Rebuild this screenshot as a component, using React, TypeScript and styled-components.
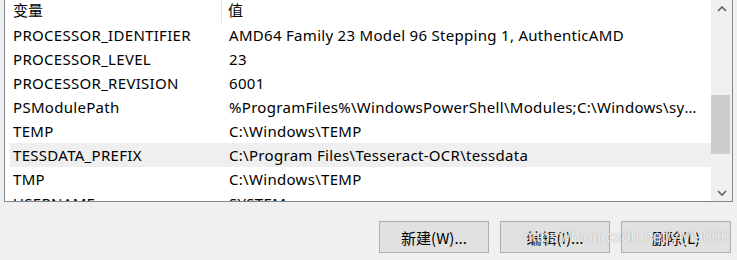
import styled, { createGlobalStyle } from "styled-components";

const GlobalStyle = createGlobalStyle`
  html, body {
    margin: 0;
    padding: 0;
    background: #f0f0f0;
  }
  body {
    width: 737px;
    height: 260px;
    overflow: hidden;
    font-family: "Noto Sans", "Noto Sans CJK SC", sans-serif;
  }
`;

const Page = styled.div`
  display: flex;
  flex-direction: column;
  width: 737px;
  height: 260px;
`;

const ListBox = styled.div`
  display: flex;
  margin-left: 4px;
  width: 727px;
  height: 201px;
  background: #fff;
  border: 1px solid #828790;
  border-top: none;
  overflow: hidden;
`;

const ListArea = styled.div`
  flex: 1;
  display: flex;
  flex-direction: column;
  padding-left: 5px;
  overflow: hidden;
`;

const Header = styled.div`
  display: flex;
  height: 23px;
  flex-shrink: 0;
`;

const HeaderCell = styled.div<{ $w?: number; $pad: number; $sep?: boolean }>`
  display: flex;
  align-items: center;
  width: ${(p) => (p.$w ? `${p.$w}px` : "auto")};
  flex: ${(p) => (p.$w ? "none" : 1)};
  padding-left: ${(p) => p.$pad}px;
  padding-bottom: 4px;
  box-sizing: border-box;
  font-size: 15px;
  color: #000;
  border-right: ${(p) => (p.$sep ? "1px solid #e5e5e5" : "none")};
  font-family: "Noto Sans CJK SC", sans-serif;
`;

const Row = styled.div<{ $selected?: boolean }>`
  display: flex;
  height: 24px;
  flex-shrink: 0;
  align-items: center;
  background: ${(p) => (p.$selected ? "#efefef" : "transparent")};
`;

const Cell = styled.div<{ $w?: number; $pad: number }>`
  width: ${(p) => (p.$w ? `${p.$w}px` : "auto")};
  flex: ${(p) => (p.$w ? "none" : 1)};
  min-width: 0;
  padding-left: ${(p) => p.$pad}px;
  padding-right: 8px;
  box-sizing: border-box;
  font-size: 15px;
  letter-spacing: 0.3px;
  line-height: 24px;
  color: #000;
  white-space: nowrap;
  overflow: hidden;
  text-overflow: ellipsis;
`;

const ScrollBar = styled.div`
  width: 21px;
  display: flex;
  flex-direction: column;
  background: #f0f0f0;
`;

const ArrowButton = styled.div`
  height: 17px;
  display: flex;
  align-items: center;
  justify-content: center;
  flex-shrink: 0;
`;

const Track = styled.div`
  flex: 1;
  display: flex;
  flex-direction: column;
  padding-top: 78px;
`;

const Thumb = styled.div`
  margin: 0 2px 0 0;
  height: 59px;
  background: #cdcdcd;
`;

const Footer = styled.div`
  position: relative;
  display: flex;
  justify-content: flex-end;
  gap: 11px;
  padding: 19px 6px 0 0;
`;

const Button = styled.div`
  width: 110px;
  height: 32px;
  box-sizing: border-box;
  display: flex;
  align-items: center;
  justify-content: center;
  background: #e1e1e1;
  border: 1px solid #adadad;
  font-size: 15px;
  color: #000;
  font-family: "Noto Sans CJK SC", sans-serif;
`;

const Watermark = styled.div`
  position: absolute;
  left: 523px;
  top: 26px;
  font-family: "Liberation Sans", Arial, sans-serif;
  font-size: 16px;
  line-height: 18px;
  color: rgba(255, 255, 255, 0.85);
  text-shadow: 0 0 1px rgba(110, 110, 110, 0.7);
  pointer-events: none;
  white-space: nowrap;
`;

const Chevron = ({ up }: { up?: boolean }) => (
  <svg width="10" height="6" viewBox="0 0 10 6">
    <path
      d={up ? "M1 5 L5 1 L9 5" : "M1 1 L5 5 L9 1"}
      fill="none"
      stroke="#606060"
      strokeWidth="1.6"
    />
  </svg>
);

const rows = [
  ["PROCESSOR_IDENTIFIER", "AMD64 Family 23 Model 96 Stepping 1, AuthenticAMD"],
  ["PROCESSOR_LEVEL", "23"],
  ["PROCESSOR_REVISION", "6001"],
  ["PSModulePath", "%ProgramFiles%\\WindowsPowerShell\\Modules;C:\\Windows\\system32\\WindowsPowerShell\\v1.0\\Modules"],
  ["TEMP", "C:\\Windows\\TEMP"],
  ["TESSDATA_PREFIX", "C:\\Program Files\\Tesseract-OCR\\tessdata"],
  ["TMP", "C:\\Windows\\TEMP"],
  ["USERNAME", "SYSTEM"],
];

export default function App() {
  return (
    <Page>
      <GlobalStyle />
      <ListBox>
        <ListArea>
          <Header>
            <HeaderCell $w={212} $pad={3} $sep>
              变量
            </HeaderCell>
            <HeaderCell $pad={6}>值</HeaderCell>
          </Header>
          {rows.map(([name, value]) => (
            <Row key={name} $selected={name === "TESSDATA_PREFIX"}>
              <Cell $w={212} $pad={3}>
                {name}
              </Cell>
              <Cell $pad={7}>{value}</Cell>
            </Row>
          ))}
        </ListArea>
        <ScrollBar>
          <ArrowButton>
            <Chevron up />
          </ArrowButton>
          <Track>
            <Thumb />
          </Track>
          <ArrowButton>
            <Chevron />
          </ArrowButton>
        </ScrollBar>
      </ListBox>
      <Footer>
        <Button>新建(W)...</Button>
        <Button>编辑(I)...</Button>
        <Button>删除(L)</Button>
        <Watermark>https://blog.csdn.net/yiyi9866</Watermark>
      </Footer>
    </Page>
  );
}
